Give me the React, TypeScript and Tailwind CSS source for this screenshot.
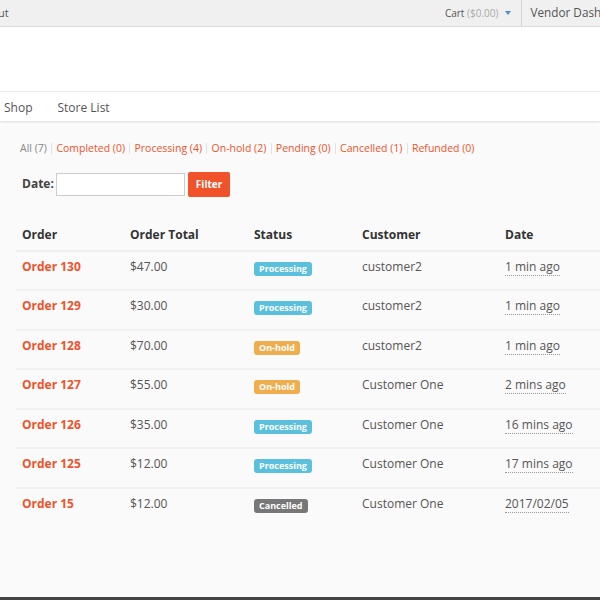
import { FC } from "react";

type Status = "Processing" | "On-hold" | "Cancelled";

interface OrderRow {
  id: number;
  total: string;
  status: Status;
  customer: string;
  date: string;
}

const orders: OrderRow[] = [
  { id: 130, total: "$47.00", status: "Processing", customer: "customer2", date: "1 min ago" },
  { id: 129, total: "$30.00", status: "Processing", customer: "customer2", date: "1 min ago" },
  { id: 128, total: "$70.00", status: "On-hold", customer: "customer2", date: "1 min ago" },
  { id: 127, total: "$55.00", status: "On-hold", customer: "Customer One", date: "2 mins ago" },
  { id: 126, total: "$35.00", status: "Processing", customer: "Customer One", date: "16 mins ago" },
  { id: 125, total: "$12.00", status: "Processing", customer: "Customer One", date: "17 mins ago" },
  { id: 15, total: "$12.00", status: "Cancelled", customer: "Customer One", date: "2017/02/05" },
];

const filters = [
  "Completed (0)",
  "Processing (4)",
  "On-hold (2)",
  "Pending (0)",
  "Cancelled (1)",
  "Refunded (0)",
];

const badgeColor: Record<Status, string> = {
  Processing: "bg-[#5bc0de]",
  "On-hold": "bg-[#f0ad4e]",
  Cancelled: "bg-[#777777]",
};

const Badge: FC<{ status: Status }> = ({ status }) => (
  <span
    className={`${badgeColor[status]} inline-block rounded-[3px] px-[5px] py-[1px] text-[9px] font-bold leading-[12px] text-white`}
  >
    {status}
  </span>
);

const TopBar: FC = () => (
  <div className="h-[27px] overflow-hidden border-b border-[#dcdcdc] bg-[#f0f0f0] text-[11px] text-[#555]">
    <div className="flex h-full w-[650px] items-center">
      <span className="-ml-[27px]">Logout</span>
      <div className="flex-1" />
      <div className="flex items-center pr-[10px] text-[10px]">
        <span>
          Cart <span className="text-[#aaa]">($0.00)</span>
        </span>
        <svg width="6" height="4" viewBox="0 0 6 4" className="ml-[7px]">
          <path d="M0 0h6L3 4z" fill="#4a8fd6" />
        </svg>
      </div>
      <div className="h-full border-l border-[#d4d4d4]" />
      <span className="whitespace-nowrap pl-[8px] pr-[16px] text-[11.75px]">Vendor Dashboard</span>
    </div>
  </div>
);

const App: FC = () => {
  return (
    <div
      className="flex h-[600px] w-[600px] flex-col overflow-hidden bg-[#fafafa] text-[#555]"
      style={{ fontFamily: '"Open Sans", "DejaVu Sans", sans-serif' }}
    >
      <TopBar />
      <div className="h-[65px] border-b border-[#ececec] bg-white" />
      <nav className="flex h-[29px] items-center gap-[25px] bg-white pl-[4px] pt-[2px] text-[12px] text-[#555] shadow-[0_1px_2px_rgba(0,0,0,0.12)]">
        <span>Shop</span>
        <span>Store List</span>
      </nav>

      <div className="flex-1 pl-[16px]">
        <div className="mt-[20px] flex items-center pl-[4px] text-[10.5px]">
          <span className="text-[#888]">All (7)</span>
          {filters.map((f) => (
            <span key={f} className="flex items-center">
              <span className="mx-[4.25px] h-[11px] border-l border-[#e2e2e2]" />
              <span className="text-[#f0522a]">{f}</span>
            </span>
          ))}
        </div>

        <div className="mt-[15px] flex items-center pl-[6px]">
          <span className="mr-[2px] text-[12px] font-bold text-[#444]">Date:</span>
          <input className="h-[23px] w-[129px] border border-[#ccc] bg-white outline-none" />
          <button className="ml-[3px] h-[25px] rounded-[2px] bg-[#f0522a] px-[8px] text-[10px] font-bold text-white">
            Filter
          </button>
        </div>

        <table className="mt-[27px] w-[620px] table-fixed border-collapse text-left text-[12px]">
          <colgroup>
            <col className="w-[108px]" />
            <col className="w-[124px]" />
            <col className="w-[108px]" />
            <col className="w-[143px]" />
            <col />
          </colgroup>
          <thead>
            <tr className="h-[27px] text-[12px] font-bold text-[#333]">
              <th className="pl-[6px] pt-[2px] align-top font-bold">Order</th>
              <th className="pl-[6px] pt-[2px] align-top font-bold">Order Total</th>
              <th className="pl-[6px] pt-[2px] align-top font-bold">Status</th>
              <th className="pl-[6px] pt-[2px] align-top font-bold">Customer</th>
              <th className="pl-[6px] pt-[2px] align-top font-bold">Date</th>
            </tr>
          </thead>
          <tbody>
            {orders.map((o) => (
              <tr key={o.id} className="h-[39.5px] border-t-2 border-[#f0f0f0]">
                <td className="pl-[6px] pt-[6px] align-top font-bold text-[#f0522a]">Order {o.id}</td>
                <td className="pl-[6px] pt-[6px] align-top">{o.total}</td>
                <td className="pl-[6px] pt-[7px] align-top">
                  <Badge status={o.status} />
                </td>
                <td className="pl-[6px] pt-[6px] align-top">{o.customer}</td>
                <td className="pl-[6px] pt-[6px] align-top">
                  <abbr className="border-b border-dotted border-[#999] no-underline">{o.date}</abbr>
                </td>
              </tr>
            ))}
          </tbody>
        </table>
      </div>
      <div className="h-[3px] bg-[#444]" />
    </div>
  );
};

export default App;
